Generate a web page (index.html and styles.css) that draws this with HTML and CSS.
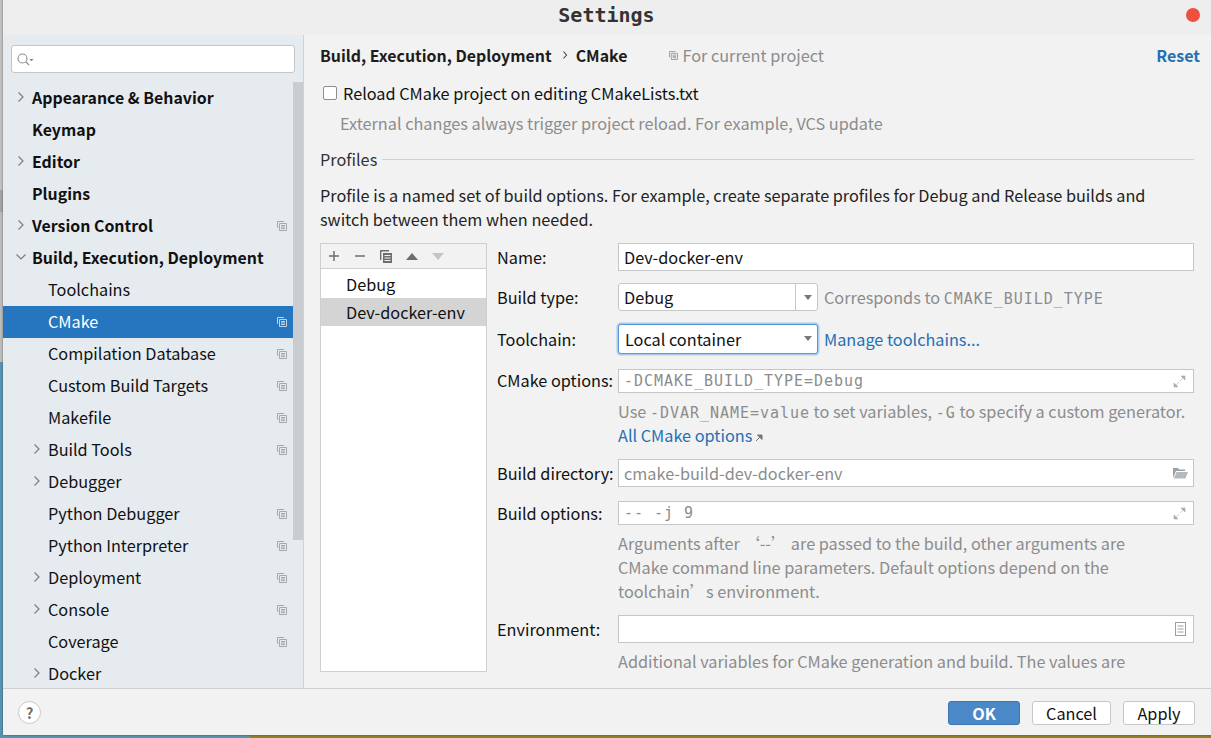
FILE: index.html
```html
<!DOCTYPE html>
<html lang="en">
<head>
<meta charset="utf-8">
<title>Settings</title>
<link rel="stylesheet" href="styles.css">
</head>
<body>
<svg class="defs" width="0" height="0" aria-hidden="true">
  <defs>
    <symbol id="copy" viewBox="0 0 10 10"><path d="M.5 7V.5H7M2.5 2.5h7v7h-7zM4 4.500h4M4 6h4M4 7.500h4" fill="none" stroke="currentColor"/></symbol>
    <symbol id="chev" viewBox="0 0 8 12"><path d="M1.500 1.500 6 6l-4.500 4.500" fill="none" stroke="currentColor" stroke-width="1.200"/></symbol>
    <symbol id="expand" viewBox="0 0 13 13"><path d="M8 1h4v4zM1 8v4h4zM7 6l3-3M3 10l3-3" fill="currentColor" stroke="currentColor" stroke-width=".6"/></symbol>
  </defs>
</svg>
<div class="window">
  <header class="titlebar"><span class="title">Settings</span><span class="close"></span></header>
  <div class="main">
    <aside class="sidebar">
      <div class="search">
        <svg width="17" height="13" viewBox="0 0 17 13"><circle cx="5.500" cy="5.500" r="4.500" fill="none" stroke="#8a8f94" stroke-width="1.100"/><path d="m9 9 3 3" stroke="#8a8f94" stroke-width="1.200"/><path d="M12.500 6h4l-2 2.200z" fill="#7a7f84"/></svg>
      </div>
      <nav class="tree">
        <div class="row top"><svg class="chev"><use href="#chev"/></svg><span>Appearance &amp; Behavior</span></div>
        <div class="row top"><span>Keymap</span></div>
        <div class="row top"><svg class="chev"><use href="#chev"/></svg><span>Editor</span></div>
        <div class="row top"><span>Plugins</span></div>
        <div class="row top"><svg class="chev"><use href="#chev"/></svg><span>Version Control</span><svg class="badge"><use href="#copy"/></svg></div>
        <div class="row top"><svg class="chev open"><use href="#chev"/></svg><span>Build, Execution, Deployment</span></div>
        <div class="row sub"><span>Toolchains</span></div>
        <div class="row sub selected"><span>CMake</span><svg class="badge"><use href="#copy"/></svg></div>
        <div class="row sub"><span>Compilation Database</span><svg class="badge"><use href="#copy"/></svg></div>
        <div class="row sub"><span>Custom Build Targets</span><svg class="badge"><use href="#copy"/></svg></div>
        <div class="row sub"><span>Makefile</span><svg class="badge"><use href="#copy"/></svg></div>
        <div class="row sub"><svg class="chev"><use href="#chev"/></svg><span>Build Tools</span><svg class="badge"><use href="#copy"/></svg></div>
        <div class="row sub"><svg class="chev"><use href="#chev"/></svg><span>Debugger</span></div>
        <div class="row sub"><span>Python Debugger</span><svg class="badge"><use href="#copy"/></svg></div>
        <div class="row sub"><span>Python Interpreter</span><svg class="badge"><use href="#copy"/></svg></div>
        <div class="row sub"><svg class="chev"><use href="#chev"/></svg><span>Deployment</span><svg class="badge"><use href="#copy"/></svg></div>
        <div class="row sub"><svg class="chev"><use href="#chev"/></svg><span>Console</span><svg class="badge"><use href="#copy"/></svg></div>
        <div class="row sub"><span>Coverage</span><svg class="badge"><use href="#copy"/></svg></div>
        <div class="row sub"><svg class="chev"><use href="#chev"/></svg><span>Docker</span></div>
      </nav>
      <div class="scrollthumb"></div>
    </aside>
    <section class="content">
      <div class="crumbs">
        <b>Build, Execution, Deployment</b>
        <svg class="crumbsep" width="7" height="10" viewBox="0 0 7 10"><path d="m1.500 1.500 3 3.500-3 3.500" fill="none" stroke="#444" stroke-width="1.100"/></svg>
        <b>CMake</b>
        <svg class="projicon"><use href="#copy"/></svg>
        <span class="muted">For current project</span>
        <a class="reset">Reset</a>
      </div>
      <label class="check"><span class="box"></span>Reload CMake project on editing CMakeLists.txt</label>
      <p class="muted checkhint">External changes always trigger project reload. For example, VCS update</p>
      <div class="group"><span>Profiles</span><i></i></div>
      <p class="desc">Profile is a named set of build options. For example, create separate profiles for Debug and Release builds and switch between them when needed.</p>
      <div class="split">
        <div class="profiles">
          <div class="tools">
            <svg width="12" height="12" viewBox="0 0 12 12"><path d="M6 1v10M1 6h10" stroke="#6e6e6e" stroke-width="1.500"/></svg>
            <svg width="12" height="12" viewBox="0 0 12 12"><path d="M1 6h10" stroke="#6e6e6e" stroke-width="1.500"/></svg>
            <svg width="12" height="13" viewBox="0 0 12 13"><path d="M.7 10V.7H9" fill="none" stroke="#6e6e6e" stroke-width="1.400"/><path d="M3 3h9v10H3z" fill="#6e6e6e"/><path d="M4.500 5.500h6M4.500 8h6M4.500 10.500h6" stroke="#f0f0f0"/></svg>
            <svg width="12" height="7" viewBox="0 0 12 7"><path d="M6 0l6 7H0z" fill="#6e6e6e"/></svg>
            <svg width="12" height="7" viewBox="0 0 12 7"><path d="M6 7l6-7H0z" fill="#c4c4c4"/></svg>
          </div>
          <div class="plist">
            <div class="pitem">Debug</div>
            <div class="pitem on">Dev-docker-env</div>
          </div>
        </div>
        <div class="form">
          <div class="f f-name"><label>Name:</label><div class="field"><span class="val">Dev-docker-env</span></div></div>
          <div class="f f-type"><label>Build type:</label>
            <div class="combo"><span class="val">Debug</span><span class="arrowbox"><i class="arrow"></i></span></div>
            <span class="muted after">Corresponds to <span class="mono">CMAKE_BUILD_TYPE</span></span></div>
          <div class="f f-chain"><label>Toolchain:</label>
            <div class="combo focus"><span class="val">Local container</span><i class="arrow"></i></div>
            <a class="link after">Manage toolchains...</a></div>
          <div class="f f-opts"><label>CMake options:</label><div class="field thin"><span class="mono muted">-DCMAKE_BUILD_TYPE=Debug</span><svg class="ficon"><use href="#expand"/></svg></div></div>
          <div class="hint h1 muted">Use <span class="mono">-DVAR_NAME=value</span> to set variables, <span class="mono">-G</span> to specify a custom generator.</div>
          <div class="hint h2"><a class="link">All CMake options</a><svg width="8" height="8" viewBox="0 0 8 8"><path d="M1 7l5-5M2.500 1H7v4.500z" stroke="#777" fill="#777"/></svg></div>
          <div class="f f-dir"><label>Build directory:</label><div class="field"><span class="muted">cmake-build-dev-docker-env</span>
            <svg class="folder" width="15" height="12" viewBox="0 0 15 12"><path d="M0 1h5l1 1.500h6V4H3L0 11z" fill="#9aa0a6"/><path d="M3.500 5H15l-2.500 6.500H.8z" fill="#b4b9bd"/></svg></div></div>
          <div class="f f-bopts"><label>Build options:</label><div class="field thin"><span class="mono muted">-- -j 9</span><svg class="ficon"><use href="#expand"/></svg></div></div>
          <div class="hint h3 muted">Arguments after ‘--’ are passed to the build, other arguments are<br>CMake command line parameters. Default options depend on the<br>toolchain’s environment.</div>
          <div class="f f-env"><label>Environment:</label><div class="field"><svg class="doc" width="11" height="14" viewBox="0 0 11 14"><rect x=".5" y=".5" width="10" height="13" fill="none" stroke="#9aa0a6"/><path d="M2.500 4h6M2.500 7h6M2.500 10h6" stroke="#9aa0a6"/></svg></div></div>
          <div class="hint h4 muted">Additional variables for CMake generation and build. The values are</div>
        </div>
      </div>
    </section>
  </div>
  <footer class="footer">
    <span class="help">?</span>
    <span class="btns"><button class="btn primary">OK</button><button class="btn">Cancel</button><button class="btn apply">Apply</button></span>
  </footer>
</div>
</body>
</html>
```
FILE: styles.css
```css
* { box-sizing: border-box; }
html, body { margin: 0; padding: 0; }
body {
  width: 1211px; height: 738px; overflow: hidden;
  background:
    linear-gradient(#c2c2c2 0 190px, #a4a4a4 190px 212px, #bcbcbc 212px 362px, transparent 362px) left top / 3px 100% no-repeat,
    linear-gradient(90deg, #5a93b0 0 250px, #8f8326 250px);
  font-family: "Noto Sans CJK SC", "Noto Sans", sans-serif;
  font-size: 16.25px; color: #111;
}
.defs { position: absolute; }
.window {
  margin-left: 3px; width: 1208px; height: 735px;
  background: #f2f2f2; display: flex; flex-direction: column;
  box-shadow: 0 0 2px rgba(0,0,0,.45);
}
.titlebar {
  height: 35px; flex: none; background: #eeeeee; padding-bottom: 6px;
  display: flex; align-items: center; justify-content: center; position: relative;
}
.title { font-family: "DejaVu Sans Mono", monospace; font-weight: 700; font-size: 20px; color: #333; margin-left: -1px; }
.close { position: absolute; right: 11px; top: 8px; width: 14px; height: 14px; border-radius: 50%; background: #ef4f3e; }
.main { flex: 1; display: flex; min-height: 0; }
.sidebar {
  width: 301px; flex: none; background: #e6ebf0; border-right: 1px solid #cfd2d5;
  position: relative; overflow: hidden; padding-top: 10px;
}
.search {
  margin-left: 8px; width: 284px; height: 28px; background: #fff;
  border: 1px solid #c4c7ca; border-radius: 3px; display: flex; align-items: center; padding-left: 5px;
}
.tree { margin-top: 9px; }
.row { height: 32px; padding-bottom: 2px; display: flex; align-items: center; position: relative; width: 290px; white-space: nowrap; }
.row.top { padding-left: 29px; font-weight: 700; font-size: 15.9px; }
.row.sub { padding-left: 45px; }
.row.selected { background: #2675bf; color: #fff; }
.chev { position: absolute; width: 8px; height: 12px; color: #7d7d7d; top: 9px; }
.top .chev { left: 14px; }
.sub .chev { left: 30px; }
.chev.open { transform: rotate(90deg); }
.badge { position: absolute; left: 274px; top: 11px; width: 10px; height: 10px; color: #a5a9ad; }
.selected .badge { color: #bcd5ee; }
.scrollthumb { position: absolute; left: 290px; top: 47px; width: 10px; height: 458px; background: #c9ccd0; }
.content { flex: 1; min-width: 0; padding: 0 17px 0 16px; overflow: hidden; position: relative; }
.muted { color: #8c8c8c; }
.crumbs { height: 40px; display: flex; align-items: center; white-space: nowrap; }
.crumbs b { color: #1c1c1c; font-size: 15.9px; }
.crumbsep { margin: 0 7px 0 10px; }
.projicon { width: 9px; height: 9px; color: #9a9a9a; margin: 0 4px 0 42px; }
.reset { margin-left: auto; color: #2470b3; font-weight: 700; font-size: 16px; margin-right: -6px; }
.check { display: flex; align-items: center; height: 24px; margin-top: 6px; padding-left: 3px; }
.box { width: 14px; height: 14px; border: 1px solid #8f8f8f; border-radius: 2px; background: #fff; margin-right: 6px; }
.checkhint { margin: 6px 0 0 20px; height: 24px; line-height: 24px; white-space: nowrap; }
.group { display: flex; align-items: center; height: 24px; margin-top: 12px; color: #333; }
.group i { flex: 1; height: 1px; background: #d1d1d1; margin-left: 5px; }
.desc { margin: 12px 0 0; line-height: 24px; width: 860px; color: #222; }
.split { display: flex; margin-top: 12px; }
.profiles { width: 167px; height: 429px; flex: none; border: 1px solid #cfcfcf; background: #fff; }
.tools { height: 25px; background: #f2f2f2; border-bottom: 1px solid #cfcfcf; display: flex; align-items: center; gap: 14px; padding-left: 7px; }
.plist { padding-top: 1px; }
.pitem { height: 28px; line-height: 28px; padding-left: 25px; color: #111; }
.pitem.on { background: #d4d4d4; }
.form { flex: 1; margin-left: 10px; min-width: 0; }
.f { display: flex; align-items: center; white-space: nowrap; }
.f label { width: 121px; flex: none; color: #111; }
.f-opts label { line-height: 20px; padding-bottom: 3px; }
.field {
  flex: 1; height: 28px; background: #fff; border: 1px solid #c6c6c6;
  display: flex; align-items: center; padding-left: 5px; position: relative; min-width: 0;
}
.field.thin { height: 24px; }
.val { color: #111; }
.combo {
  width: 200px; height: 28px; background: #fff; border: 1px solid #c6c6c6; border-radius: 3px;
  display: flex; align-items: center; padding-left: 5px; position: relative; flex: none;
}
.combo.focus { height: 30px; border: 1px solid #5a96d8; box-shadow: 0 0 0 1.5px #a9cbee; padding-left: 6px; }
.arrowbox { position: absolute; right: 0; top: 0; bottom: 0; width: 22px; border-left: 1px solid #c6c6c6; }
.arrow { position: absolute; right: 5px; top: 11px; width: 0; height: 0; border-left: 4.5px solid transparent; border-right: 4.5px solid transparent; border-top: 5px solid #777; }
.after { margin-left: 6px; }
.link { color: #2470b3; }
.mono { font-family: "DejaVu Sans Mono", monospace; font-size: 15px; letter-spacing: .97px; line-height: 1; }
.hint { line-height: 24px; height: 24px; margin-left: 121px; white-space: nowrap; }
.hint.h3 { height: 72px; }
.ficon { position: absolute; right: 7px; top: 5px; width: 13px; height: 13px; color: #a9adb1; }
.folder { position: absolute; right: 5px; top: 7px; }
.doc { position: absolute; right: 7px; top: 6px; }
.f-type { margin-top: 12px; }
.f-chain { margin-top: 13px; }
.f-opts { margin-top: 15px; }
.h1 { margin-top: 6px; }
.h2 svg { margin-left: 3px; }
.f-dir { margin-top: 12px; }
.f-bopts { margin-top: 14px; }
.h3 { margin-top: 6px; }
.f-env { margin-top: 12px; }
.h4 { margin-top: 6px; }
.footer {
  height: 47px; flex: none; border-top: 1px solid #d0d0d0; background: #f2f2f2;
  display: flex; align-items: center; justify-content: space-between; padding: 0 16px 0 15px;
}
.help { width: 23px; height: 23px; border-radius: 50%; border: 1px solid #c8c8c8; background: #fff; text-align: center; line-height: 21px; font-size: 15px; font-weight: 700; color: #6e6e6e; margin-top: 1px; }
.btns { display: flex; gap: 12px; margin-top: 1px; }
.btn { height: 24px; width: 79px; border: 1px solid #c6c6c6; border-radius: 3px; background: #fff; font: inherit; line-height: 20px; color: #111; padding: 0; }
.btn.apply { width: 72px; }
.btn.primary { width: 72px; background: #4a88c7; border-color: #3d76b0; color: #fff; font-weight: 700; }
```
